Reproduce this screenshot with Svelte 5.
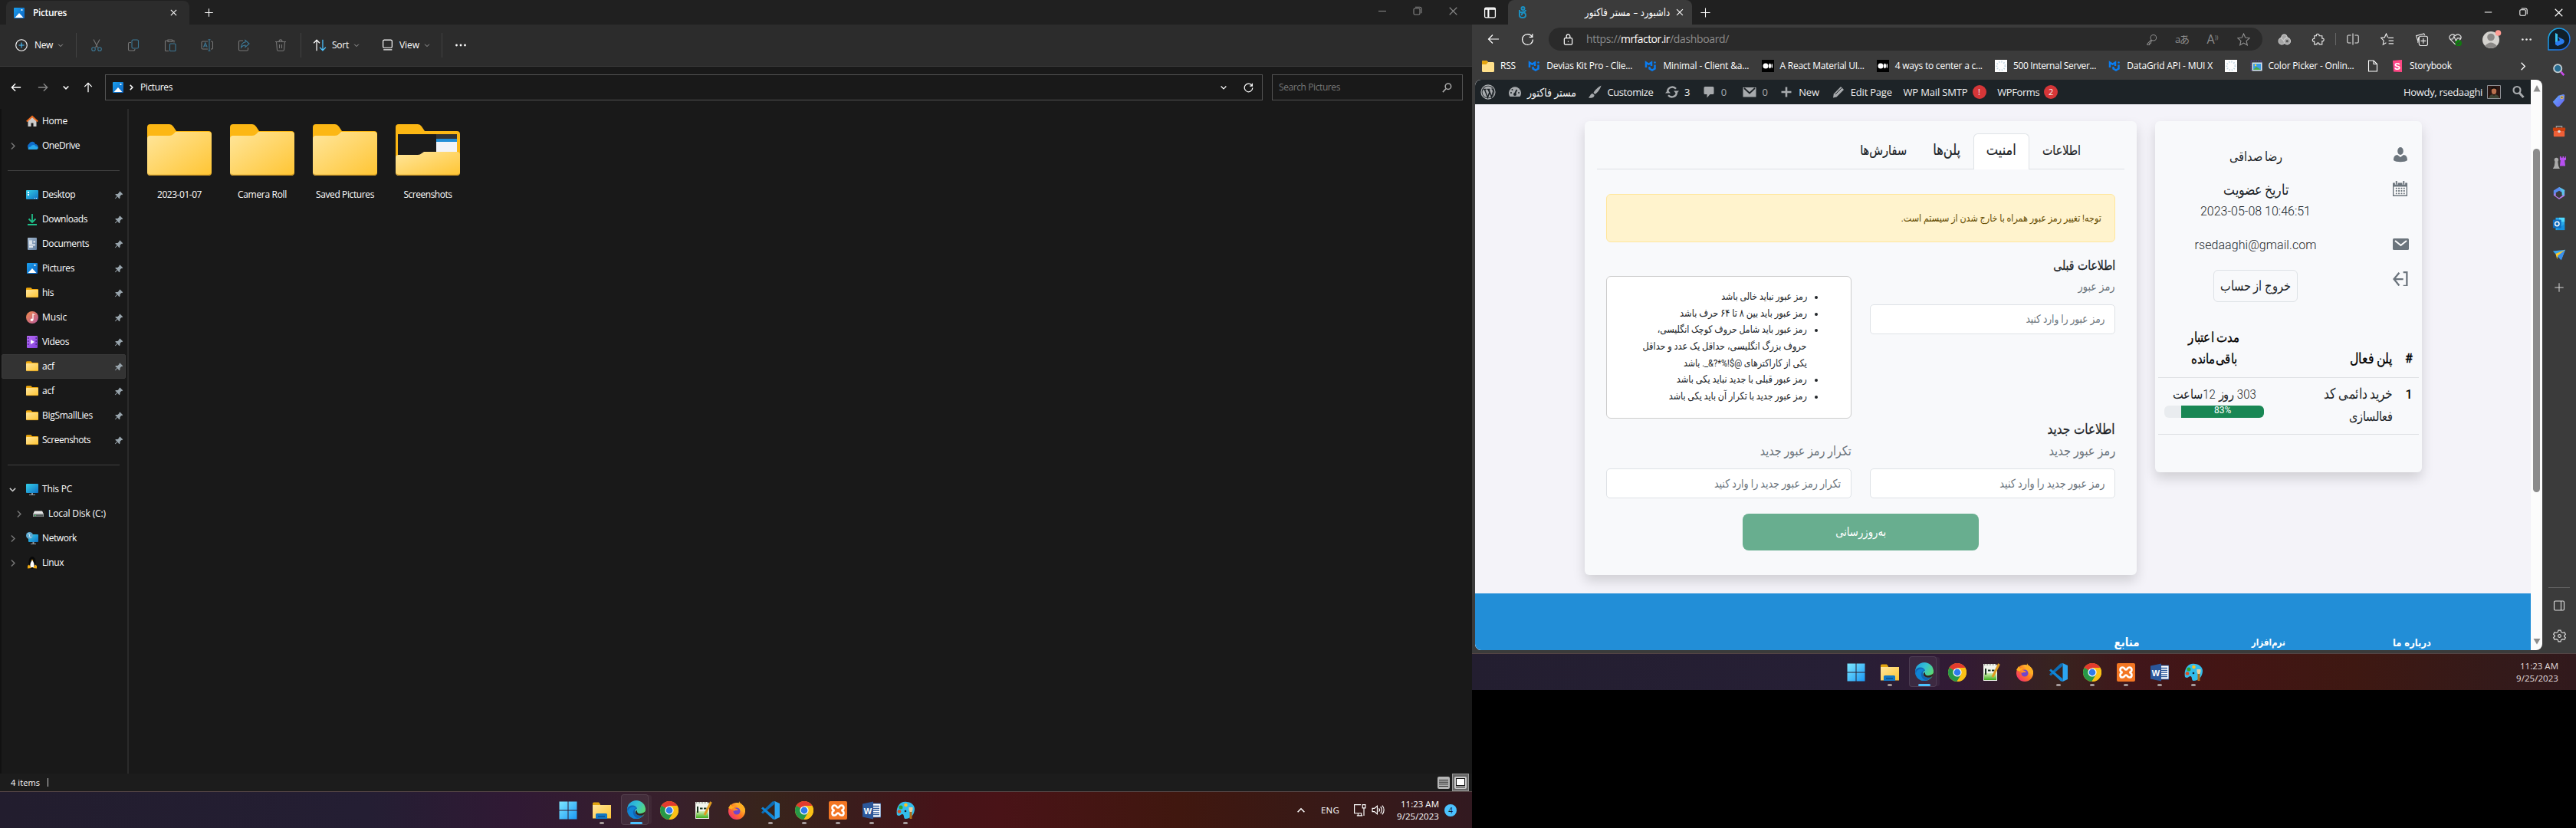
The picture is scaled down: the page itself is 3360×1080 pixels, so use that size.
<script lang="ts">
  // Tunes a label to a given width: Latin by letter spacing,
  // Persian by font size plus a slight horizontal condensing.
  const CONDENSE = 1.2;

  function fit(node: HTMLElement, width: number) {
    const natural = node.getBoundingClientRect().width;
    const text = node.textContent ?? '';
    if (!width || !natural) return;
    if (/[\u0600-\u06ff]/.test(text)) {
      const style = getComputedStyle(node);
      const size = parseFloat(style.fontSize);
      node.style.fontSize = `${((size * width) / natural) * CONDENSE}px`;
      const grown = node.getBoundingClientRect().width;
      node.style.marginInlineEnd = `${width - grown}px`;
      node.style.transformOrigin = style.direction === 'rtl' ? 'right' : 'left';
      node.style.transform = `scaleX(${width / grown})`;
    } else {
      node.style.letterSpacing = `${(width - natural) / text.length}px`;
    }
  }

  const chromeLogo =
    '<circle cx="12" cy="12" r="12" fill="#fbc116"/><path d="M12 12 1.6 6A12 12 0 0 1 22.4 6H12Z" fill="#e33b2e"/><path d="M1.6 6A12 12 0 0 0 11.5 24L17 15 12 12Z" fill="#279847"/><path d="M1.6 6 7 15l5-3Z" fill="#279847"/><path d="M22.4 6H12v6l5 3-5.500 9A12 12 0 0 0 22.400 6Z" fill="#fbc116"/><circle cx="12" cy="12" r="5.600" fill="#fff"/><circle cx="12" cy="12" r="4.400" fill="#2f7bec"/>';

  const line: Record<string, string> = {
    close: '<path d="M3.500 3.500l9 9M12.500 3.500l-9 9"/>',
    plus: '<path d="M8 1.500v13M1.500 8h13"/>',
    min: '<path d="M3 8.500h10"/>',
    max: '<rect x="3" y="5" width="8" height="8" rx="1.500"/><path d="M5 3.200h6a2 2 0 0 1 2 2v6"/>',
    down: '<path d="M3.500 6l4.500 4.500L12.500 6"/>',
    up: '<path d="M3 10.500l5-5 5 5"/>',
    right: '<path d="M6 3l5 5-5 5"/>',
    newItem: '<circle cx="8" cy="8" r="7.300"/><path d="M8 4.500v7M4.500 8h7" stroke="#4cc2ff"/>',
    cut: '<path d="M4 .5l5.500 10.500M12 .5L6.500 11"/><g stroke="#3d7896"><circle cx="4" cy="13" r="2.300"/><circle cx="12" cy="13" r="2.300"/></g>',
    copy: '<path d="M5 4.500H3a1.500 1.500 0 0 0-1.500 1.500v7.500A1.500 1.500 0 0 0 3 15h5a2 2 0 0 0 2-2"/><rect x="6" y="1" width="8.500" height="11" rx="1.500" stroke="#3d7896"/>',
    paste: '<path d="M5 2H2.500A1 1 0 0 0 1.500 3v11.500a1 1 0 0 0 1 1H6M11 2h2v2.500M5 1h5.500v2.500H5z"/><rect x="7.500" y="6" width="7.500" height="9.500" rx="1" stroke="#3d7896"/>',
    rename: '<path d="M9 3H2.500A1.500 1.500 0 0 0 1 4.500v7A1.500 1.500 0 0 0 2.500 13H9M13 3h1a1.500 1.500 0 0 1 1.500 1.500v7A1.500 1.500 0 0 1 14 13h-1"/><path d="M3.500 10.500L5.800 5l2.400 5.500M4.300 9h3M11 .8v14.400M9.500.8h3M9.500 15.200h3" stroke="#3d7896"/>',
    share: '<path d="M7 2H3a1.500 1.500 0 0 0-1.500 1.500v10A1.500 1.500 0 0 0 3 15h9a1.500 1.500 0 0 0 1.500-1.500V11"/><path d="M10 1.500L15 6l-5 4.500V8C7 8 5.500 9.500 4.500 11 4.500 7 7 4 10 4Z" stroke="#3d7896"/>',
    trash: '<path d="M1 3.500h14M6 3.500C6 0 10 0 10 3.500M2.500 3.500l1 10.500a1.500 1.500 0 0 0 1.500 1.300h6a1.500 1.500 0 0 0 1.500-1.300l1-10.500M6.500 7v5M9.500 7v5"/>',
    sort: '<path d="M4.500 14.500V2M1 5.500L4.500 2 8 5.500"/><path d="M11.500 1.500V14M8 10.500l3.500 3.500 3.500-3.500" stroke="#4cc2ff"/>',
    view: '<rect x="2.500" y="2" width="11" height="9.500" rx="1.500"/><path d="M3 14h10.500"/>',
    dots: '<g fill="currentColor" stroke="none"><circle cx="2.500" cy="8" r="1.400"/><circle cx="8" cy="8" r="1.400"/><circle cx="13.500" cy="8" r="1.400"/></g>',
    back: '<path d="M15 8H1.500M7 2.500L1.500 8 7 13.500"/>',
    forward: '<path d="M1 8h13.500M9 2.500L14.500 8 9 13.500"/>',
    upArrow: '<path d="M8 15V1.500M2.500 7L8 1.500 13.500 7"/>',
    reload: '<path d="M13.500 4.500A6.500 6.500 0 1 0 14.500 8M14 1v4h-4"/>',
    find: '<circle cx="9.500" cy="6" r="4"/><path d="M6.500 9.200L2 14"/>',
    workspaces: '<rect x="1.500" y="2" width="13" height="12" rx="1.500"/><path d="M1.500 3.500h13M6 4v10" stroke-width="2"/>',
    lock: '<rect x="2.500" y="6" width="11" height="9" rx="1.500"/><path d="M5.500 6V3.500a2.500 2.500 0 0 1 5 0V6M8 10v1.500"/>',
    key: '<circle cx="10.500" cy="5.500" r="4"/><path d="M7.500 8.500L2 14v1.500h3V13h2v-2l1.500-1.500M11.500 4.500h.5"/>',
    star: '<path d="M8 1l2.100 4.700 5.200.6-3.900 3.500 1.100 5.100L8 12.300 3.500 14.900l1.100-5.100L.7 6.300l5.200-.6Z"/>',
    puzzle: '<path d="M3.500 3.500H6C5 .5 10 .5 9.500 3.500h3.500v3.200c3-.7 3 4 0 3.300V14H9.500c.5-2.500-3.500-2.500-3 0h-3v-3.500C.500 11 .500 6.500 3.500 7Z"/>',
    split: '<path d="M5.500 3H2A1.500 1.500 0 0 0 .8 4.500v7A1.500 1.500 0 0 0 2 13h3.500M10.500 3H14a1.500 1.500 0 0 1 1.200 1.500v7A1.500 1.500 0 0 1 14 13h-3.500M8 .5v15"/>',
    favorites: '<path d="M9 5.500L7 1 5 5.500 0.600 6l3.300 3.300-.8 5L7 12M9.500 6H16M10 9.500h6M10 13h6"/>',
    collections: '<path d="M4 11L1.500 3.500 11 .8l1 2M4.500 5l-1 7"/><rect x="5" y="4" width="10.500" height="11.500" rx="2"/><path d="M10.200 6.500v6.500M7 9.700h6.500"/>',
    heart: '<path d="M8 14L1.500 7.500C-1 3 5 0 8 3.500 11 0 17 3 14.500 7.500L8 14M1 7.500h4L6.500 4 9 10l1.500-3.500H15"/><circle cx="12" cy="12.500" r="4" fill="#107c10" stroke="none"/><path d="M10.200 12.500l1.200 1.300 2.400-2.600" stroke="#3b3b3b"/>',
    file: '<path d="M2.500 1h6.500l4.500 4.500V15h-11ZM9 1v4.500h4.500"/>',
    panel: '<rect x="1.500" y="2" width="13" height="12" rx="1.500"/><path d="M10.500 2v12"/>',
    gear: '<path d="M6.600 1h2.800l.6 2.200 1.800 1 2.200-.7 1.400 2.500L13.800 7.600v1l1.600 1.500-1.400 2.500-2.200-.7-1.800 1L9.400 15H6.600L6 12.900l-1.800-1-2.200.7L.6 10l1.600-1.500v-1L.6 6 2 3.500l2.200.7 1.800-1Z"/><circle cx="8" cy="8" r="1.800"/>',
    display: '<path d="M9.500 1.500H1.500v10.500h9M4.500 15h7M6 12v3M10 12v3M11.500 1.500h3.500v4h-3.500zM13.200 5.500v9.500"/>',
    speaker: '<path d="M1 6v4h2.500L7 13V3L3.500 6ZM9 6a3 3 0 0 1 0 4M11 4a6 6 0 0 1 0 8M13 2.500a8 8 0 0 1 0 11"/>',
  };

  const art: Record<string, string> = {
    picture: '<rect x="1" y="1" width="14" height="14" rx="1" fill="url(#blue)"/><path d="M2.500 14L8 8l5.500 6Z" fill="#fff"/><circle cx="11.500" cy="4" r="1.100" fill="#fff"/>',
    home: '<path d="M2.500 7.500L8 2.500l5.500 5V15h-4v-4.500h-3V15h-4Z" fill="#ccc"/><path d="M.8 8.500L8 1.800l7.200 6.700" fill="none" stroke="#ee6a1c" stroke-width="2"/>',
    onedrive: '<path d="M4 12.500a4 4 0 0 1 0-7C6 1.500 11 2 12 6c4 0 5 5 2 6.500Z" fill="#0f6cc9"/><path d="M3 13c-1-2 1-4 3-3.500C8 6 12 6.500 12.500 9c4-.5 4 4 1 4Z" fill="#28a8ea"/>',
    desktop: '<rect y="2" width="16" height="12" rx="1" fill="url(#teal)"/><path d="M2 4h2v2H2zM2 7h2v2H2z" fill="#fff"/><path d="M11 12.500h1M13 12.500h1" stroke="#fff"/>',
    download: '<path d="M8 1v10M3.500 7.500L8 12l4.500-4.500M2 15h12" fill="none" stroke="#1fbf8a" stroke-width="1.800"/>',
    document: '<rect x="2" width="12" height="16" rx="1" fill="url(#slate)"/><path d="M4 4.500h4M4 7h4M4 9.500h8M4 12h5M9.500 5.500h2.500" stroke="#fff" stroke-width="1.500"/>',
    folder: '<path d="M0 2.500A1.500 1.500 0 0 1 1.500 1.200h5L8 3h7a1 1 0 0 1 1 1v9H0Z" fill="#f0a80c"/><rect y="4" width="16" height="10" rx="1" fill="url(#folder)"/><path d="M.5 13.700h15" stroke="#d99a18" stroke-width=".7"/>',
    music: '<circle cx="8" cy="8" r="8" fill="url(#music)"/><path d="M9 3v8M9 3.500l2.500 1" fill="none" stroke="#fff" stroke-width="1.300"/><circle cx="7.500" cy="11.300" r="1.800" fill="#fff"/>',
    video: '<rect x="1" width="14" height="16" rx="1" fill="url(#violet)"/><path d="M6 5l5 3-5 3Z" fill="#fff"/><path d="M2.800 2v12M13.200 2v12" stroke="#562a96" stroke-width="1.500" stroke-dasharray="2 2"/>',
    pc: '<rect y="1" width="16" height="12" rx="1" fill="url(#teal)"/><path d="M7 13h2v2H7zM4 15h8v1H4z" fill="#8d98a0"/>',
    disk: '<path d="M3 4.500h10l2 4H1Z" fill="#e4e4e4"/><path d="M1 8h14v4H1Z" fill="#8f9494"/><path d="M2 10.500h12" stroke="#4d5555" stroke-width="2"/><circle cx="4" cy="10.500" r=".8" fill="#3ee36b"/>',
    network: '<rect x="3" y="3" width="13" height="10" rx="1" fill="url(#teal)"/><path d="M8.500 13h2v2h-2zM6 15h7v1H6z" fill="#8d98a0"/><circle cx="4.500" cy="4.500" r="4.500" fill="#5aa7cf"/><path d="M2 2l3 1-1 3 3 1" stroke="#cdebf7" fill="none"/>',
    linux: '<ellipse cx="8" cy="8" rx="4.500" ry="8" fill="#080808"/><path d="M8 4.500c2 2.500 3 5 2.500 9.500h-5C5 9.500 6 7 8 4.500Z" fill="#fff"/><path d="M6.500 4h3L8 5.500ZM2 12l2-1.500L7 15l-5 .5ZM14 12l-2-1.500L9 15l5 .5Z" fill="#f0aa12"/>',
    pin: '<path d="M10 2l5 5-1.500 1.200-1-.2-2.500 2.500v3L8.500 15 5.800 11.200 2 15l-.8-.8L5 10.400 1.500 7.500 3 6.500h3L8.700 4 8.500 3Z" fill="#99a5ad"/>',
    listView: '<rect width="16" height="16" rx="2" fill="#b5b5b5"/><path d="M2 4.500h12M2 7.200h12M2 9.800h12M2 12.500h12" stroke="#222"/>',
    tileView: '<rect width="16" height="16" rx="2" fill="#c8c8c8"/><rect x="2.500" y="2.500" width="11" height="9" fill="#fff" stroke="#111"/><path d="M2 13.700h12" stroke="#111"/>',
    site: '<g fill="none" stroke="#1b8fc0" stroke-width="2"><circle cx="9.500" cy="3" r="2"/><path d="M5 5v7c0 4 8 4 8 0 0-5-6-4-5 0M5 8c3 0 8 0 8-3"/></g>',
    lighthouse: '<g fill="#a5a5a5" stroke="#d5d5d5"><circle cx="5" cy="10" r="4"/><circle cx="8" cy="5.500" r="3.500"/><circle cx="11.500" cy="10" r="4"/></g><circle cx="11.500" cy="10" r="1.500" fill="#555"/>',
    mui: '<g fill="none" stroke="#0a7cf0" stroke-width="2.500"><path d="M2 10V3.500l3.500 2.300L9 3.500V8M6.500 9v2.500L10 13.500l3.500-2V6.500"/></g><circle cx="13.500" cy="3.500" r="1.300" fill="#0a7cf0"/>',
    medium: '<rect width="16" height="16" fill="#000"/><circle cx="5" cy="8" r="3.500" fill="#fff"/><ellipse cx="10.500" cy="8" rx="1.500" ry="3.200" fill="#fff"/><ellipse cx="13.300" cy="8" rx=".8" ry="3" fill="#fff"/>',
    loading: '<rect width="16" height="16" fill="#fdfdfd"/><circle cx="8" cy="8" r="5.500" fill="none" stroke="#b9d0df" stroke-width="2" stroke-dasharray="1.200 2"/>',
    rss: '<path d="M0 2.500A1.500 1.500 0 0 1 1.500 1H6l2 2h6.500A1.500 1.500 0 0 1 16 4.500v10A1.500 1.500 0 0 1 14.500 16h-13A1.500 1.500 0 0 1 0 14.500Z" fill="#ffe08a"/><path d="M0 6V2.500A1.500 1.500 0 0 1 1.500 1H6l2 2-2.500 3Z" fill="#e5a50f"/>',
    photo: '<rect x="1" y="1.500" width="14" height="12" fill="none" stroke="#5740a0" stroke-dasharray="2 1"/><rect x="2.500" y="3.500" width="13" height="11" fill="#d7e9f7"/><rect x="4" y="5" width="10" height="8" fill="#3d9be8"/><path d="M4 13l4-4 6 4Z" fill="#4aa84a"/><circle cx="7" cy="7" r="1.200" fill="#ffd83a"/>',
    storybook: '<path d="M2 1l12-1v16L3 15.500Z" fill="#ff4785"/><text x="8" y="12.500" text-anchor="middle" font-family="Liberation Sans" font-weight="700" font-size="12" fill="#fff">S</text>',
    wordpress: '<circle cx="10" cy="10" r="9" fill="none" stroke="#a7aaad" stroke-width="1.300"/><circle cx="10" cy="10" r="7.500" fill="#a7aaad"/><path d="M3.500 6.500h4M5.500 7l4 10 2.300-6.500L10 6.500M8.500 6.500h4M11 7l3.500 9.500L16.800 9c.4-2-1.800-2-1.800-3.500" fill="none" stroke="#1d2327" stroke-width="1.500"/>',
    gauge: '<path d="M3.500 16a8 8 0 1 1 13 0Z" fill="#a7aaad"/><path d="M10 12l2.500-5" stroke="#1d2327" stroke-width="1.800"/><g fill="#1d2327"><circle cx="10" cy="13" r="2"/><circle cx="5" cy="11" r="1"/><circle cx="6.500" cy="7" r="1"/><circle cx="15" cy="11" r="1"/></g>',
    brush: '<path d="M18.500 1.500C14 4 10 8 8.500 11l2 2c3-2 7-7 8-11.500ZM7.500 12c-3 0-3 3-5.500 5.500 4 .8 8-.5 7.500-3.500Z" fill="#a7aaad"/>',
    update: '<path d="M4 9a6.300 6.300 0 0 1 11-3.200M16 11a6.300 6.300 0 0 1-11 3.200" fill="none" stroke="#a7aaad" stroke-width="2.400"/><path d="M12 8.500h7L15.500 12.500ZM1 11.500h7L4.500 7.500Z" fill="#a7aaad"/>',
    comment: '<path d="M5 3h10a1.500 1.500 0 0 1 1.500 1.500v7A1.500 1.500 0 0 1 15 13h-3.500l-4 4.500V13H5a1.500 1.500 0 0 1-1.500-1.500v-7A1.500 1.500 0 0 1 5 3Z" fill="#a7aaad"/>',
    wpMail: '<rect x="1.500" y="4" width="17" height="12.500" fill="#a7aaad"/><path d="M3 5l7 6.500L17 5" fill="none" stroke="#1d2327" stroke-width="1.800"/>',
    wpPlus: '<path d="M10 3.500v13M3.500 10h13" stroke="#a7aaad" stroke-width="2.600"/>',
    pencil: '<path d="M13 3l4 4-9.500 9.500L3 17.500l.8-5Z" fill="#a7aaad"/><path d="M6 13l8-8" stroke="#1d2327"/>',
    wpSearch: '<circle cx="8" cy="7.500" r="4.500" fill="none" stroke="#a7aaad" stroke-width="2.200"/><path d="M11 11l5.500 6" stroke="#a7aaad" stroke-width="3"/>',
    person: '<ellipse cx="10" cy="5" rx="3.800" ry="5" fill="#6c757d"/><path d="M1 17c0-5 2-6.500 5-7l4 3 4-3c3 .5 5 2 5 7-3 3-15 3-18 0Z" fill="#6c757d"/>',
    calendar: '<path d="M0 2.500h20V21H0Z" fill="#6c757d"/><path d="M1.500 8h17v11.500h-17Z" fill="#fff"/><path d="M5 0v5M15 0v5" stroke="#f8f9fb" stroke-width="4"/><path d="M5 0v5M15 0v5" stroke="#6c757d" stroke-width="2"/><path d="M4 10.300h13M4 13.700h13M4 17.200h13" stroke="#6c757d" stroke-width="2" stroke-dasharray="2 1.500"/>',
    mail: '<rect y="3" width="21" height="15" rx="1.500" fill="#6c757d"/><path d="M3 6l7.500 6L18 6" fill="none" stroke="#fff" stroke-width="2"/>',
    exit: '<path d="M8 3.500L1.500 11.500 8 19.500M2 11.500h11M13 3h4.500v17H13" fill="none" stroke="#6c757d" stroke-width="2.200"/>',
    bing: '<path d="M2 28V15A14 14 0 1 1 16 29H2Z" fill="#10202b" stroke="url(#bing)" stroke-width="1.500"/><path d="M11 7l3 1.500v11L11 22Z" fill="#36c5f0"/><path d="M11 22v-3l6-2.500L14.500 12l7 3.500c2 1.500 1.500 4-.5 5.500L14 24Z" fill="#2a7df0"/>',
    sideSearch: '<circle cx="8" cy="8" r="5.700" fill="#276c91" stroke="#c4cdd2" stroke-width="2"/><path d="M12.500 13l4.500 5" stroke="#c94bea" stroke-width="3"/>',
    tag: '<path d="M1 12L9 3l7-2 2 1-.500 8-7.500 9-3 .5L2 14Z" fill="url(#tag)"/><circle cx="14" cy="5.500" r="1.800" fill="#384c98" stroke="#ffcb2e" stroke-width="1.200"/>',
    toolbox: '<path d="M6 6V3h8v3" fill="none" stroke="#999" stroke-width="1.500"/><rect x="1" y="5" width="18" height="5" rx="1" fill="#c9400f"/><rect x="2" y="10" width="16" height="8" rx="1" fill="#ee6038"/><circle cx="10" cy="10.500" r="2" fill="#d6dadd"/>',
    chess: '<path d="M11 1h2v2h2V1h2v2h2V1h1v5l-2 1 1 8h-8l1-8-1-1Z" fill="#b750ef"/><g fill="#aaa"><circle cx="6" cy="6" r="3"/><path d="M4 8h4l1 7 2 4H1l2-4Z"/></g>',
    m365: '<path d="M10 1l8 4.500-3 4-5-3-5 3V14l-3-1V6Z" fill="#588cf0"/><path d="M2 13l3-4v5l5 3 5-4V9l3-3.500V14l-8 5Z" fill="#b678e8"/><path d="M10 1l8 4.500-1 8-3-1V8Z" fill="#5ac6e9"/>',
    outlook: '<path d="M5 1h13v18H5Z" fill="#28a8ea"/><path d="M10 1h8v6h-8Z" fill="#50d9ff"/><path d="M18 10v9H6Z" fill="#1490df"/><rect x="1" y="4" width="12" height="12" rx="1" fill="#0f6cbd"/><circle cx="7" cy="10" r="3" fill="none" stroke="#fff" stroke-width="1.700"/>',
    plane: '<path d="M1 5l18-2-6 15-5-5Z" fill="#38a5ef"/><path d="M19 3L8 12l-1 5-2-8Z" fill="#ffc928"/><path d="M19 3L8 12l5 6Z" fill="#3b8eea"/>',
    windows: '<path d="M.5.5h11v11H.5zM12.500.5h11v11h-11zM.5 12.500h11v11H.5zM12.500 12.500h11v11h-11z" fill="url(#win)"/>',
    explorer: '<path d="M0 3a1.500 1.500 0 0 1 1.500-1.500H8L10 4v3H0Z" fill="#e0a30f"/><path d="M0 5h24v17.500H0Z" fill="url(#folder)"/><path d="M4 23v-5.500A1.500 1.500 0 0 1 5.500 16h12a1.500 1.500 0 0 1 1.500 1.500V23Z" fill="#1278c4"/><path d="M7 20h9" stroke="#0c5b9c" stroke-width="2"/>',
    edge: '<circle cx="12" cy="12" r="12" fill="url(#edge)"/><path d="M0 11C2 5 12 5 13 11c-3 0-4 4-1 7 3 2 7 2 10 0-4 7-13 8-18 3C1 18 0 15 0 11Z" fill="#1262b3"/><path d="M8 14c-1 4 2 9 7 9.500-7 1.500-13-2-14-8C1 9 8 6 12 10c-2 .5-3 2-4 4Z" fill="#0f83d5"/><path d="M13 13c-1 5 6 6 11 1l-1 3.500c-3 3-8 3-11 .500-2-2-1-5 1-5Z" fill="#32201f"/>',
    chrome: chromeLogo,
    notepad: '<path d="M2 1h16l2 2v20H2Z" fill="#f2f5ee"/><path d="M3 13h16v9H3Z" fill="url(#green)"/><path d="M3 2h15" stroke="#a3a79c" stroke-width="2" stroke-dasharray="1 1"/><path d="M5 7v8M8 9.500h3.500M13 9.500h3.500" stroke="#16301b" stroke-width="2"/><path d="M22.500 1L14 18" stroke="#df9b20" stroke-width="3"/>',
    firefox: '<circle cx="12" cy="13" r="11" fill="url(#fox)"/><path d="M15 0c1 4 9 6 8 14l-6-1-5-6c2-1 3-4 3-7ZM1 9l3-5 2 3 4-1-4 5Z" fill="#ffae22"/><circle cx="12" cy="13" r="4.500" fill="#7145cb"/><path d="M6 9c3-1 5 1 8 2-2 2-4 0-6 2Z" fill="#ff8e26"/>',
    vscode: '<path d="M17 4L2 16.500 0 14.500 14.500.500 18 0Z" fill="#0c6eb7"/><path d="M17 20L2 7.500 0 9.500l15 14L18 24Z" fill="#0f86d8"/><path d="M17.500 0L24 3v18l-6.500 3Z" fill="#2ba4f1"/>',
    xampp: '<rect width="24" height="24" rx="2" fill="#f37623"/><path d="M7.500 5.500c-4 0-4 5.500 0 6.500-4 1-4 6.500 0 6.500 3 0 2.500-3 4.500-3s1.500 3 4.500 3c4 0 4-5.500 0-6.500 4-1 4-6.500 0-6.500-3 0-2.500 3-4.500 3s-1.500-3-4.500-3Z" fill="none" stroke="#fff" stroke-width="2.600"/>',
    word: '<rect x="12" y="3" width="12" height="18" fill="#fff" stroke="#2b579a"/><path d="M14 6.500h8M14 9.300h8M14 12h8M14 14.800h8M14 17.500h8" stroke="#2b579a" stroke-width="1.300"/><path d="M0 3.500L14 .5v23l-14-3Z" fill="#2b579a"/><text x="7" y="16.500" text-anchor="middle" font-family="Liberation Sans" font-weight="700" font-size="11" fill="#fff">W</text>',
    paint: '<path d="M14 1C5-1-1 8 1 18c3 3 5-1 7-1 3 0 1 6 4 6 7 0 12-6 12-13C24 5 19 1 14 1Z" fill="#32bdec"/><circle cx="6" cy="8" r="2.500" fill="#2fa52f"/><circle cx="12.500" cy="5" r="2.300" fill="#ffc220"/><circle cx="4" cy="13.500" r="2.300" fill="#dc4e22"/><circle cx="12" cy="13" r="1.300" fill="#123"/><path d="M19 12v11" stroke="#b06d18" stroke-width="3"/><path d="M16.500 8h5v3l-1 3h-3l-1-3Z" fill="#e9cf9d"/>',
  };

  const places = [
    { label: 'Home', art: 'home', w: 33 },
    { label: 'OneDrive', art: 'onedrive', w: 49, caret: 'right' },
    null,
    { label: 'Desktop', art: 'desktop', w: 43, pin: true },
    { label: 'Downloads', art: 'download', w: 59, pin: true },
    { label: 'Documents', art: 'document', w: 61, pin: true },
    { label: 'Pictures', art: 'picture', w: 42, pin: true },
    { label: 'his', art: 'folder', w: 15, pin: true },
    { label: 'Music', art: 'music', w: 32, pin: true },
    { label: 'Videos', art: 'video', w: 35, pin: true },
    { label: 'acf', art: 'folder', w: 16, pin: true, active: true },
    { label: 'acf', art: 'folder', w: 16, pin: true },
    { label: 'BigSmallLies', art: 'folder', w: 66, pin: true },
    { label: 'Screenshots', art: 'folder', w: 63, pin: true },
    null,
    { label: 'This PC', art: 'pc', w: 39, caret: 'down' },
    { label: 'Local Disk (C:)', art: 'disk', w: 75, caret: 'right', nested: true },
    { label: 'Network', art: 'network', w: 45, caret: 'right' },
    { label: 'Linux', art: 'linux', w: 28, caret: 'right' },
  ];

  const folders = [
    { name: '2023-01-07', w: 58 },
    { name: 'Camera Roll', w: 64 },
    { name: 'Saved Pictures', w: 76 },
    { name: 'Screenshots', w: 63, preview: true },
  ];

  const apps = [
    { art: 'windows' }, { art: 'explorer', open: true }, { art: 'edge', active: true }, { art: 'chrome' },
    { art: 'notepad' }, { art: 'firefox' }, { art: 'vscode', open: true }, { art: 'chrome', open: true },
    { art: 'xampp', open: true }, { art: 'word', open: true }, { art: 'paint', open: true },
  ];

  const bookmarks = [
    { art: 'rss', label: 'RSS', w: 20 },
    { art: 'mui', label: 'Devias Kit Pro - Clie...', w: 112 },
    { art: 'mui', label: 'Minimal - Client &a...', w: 112 },
    { art: 'medium', label: 'A React Material UI...', w: 110 },
    { art: 'medium', label: '4 ways to center a c...', w: 114 },
    { art: 'loading', label: '500 Internal Server...', w: 108 },
    { art: 'mui', label: 'DataGrid API - MUI X', w: 112 },
    { art: 'loading' },
    { art: 'photo', label: 'Color Picker - Onlin...', w: 112 },
    { line: 'file' },
    { art: 'storybook', label: 'Storybook', w: 55 },
  ];

  const adminItems = [
    { art: 'wordpress' },
    { art: 'gauge', label: 'مستر فاکتور', w: 64 },
    { art: 'brush', label: 'Customize', w: 60 },
    { art: 'update', label: '3', w: 7 },
    { art: 'comment', label: '0', w: 7, dim: true },
    { art: 'wpMail', label: '0', w: 7, dim: true, shift: true },
    { art: 'wpPlus', label: 'New', w: 27 },
    { art: 'pencil', label: 'Edit Page', w: 54 },
    { label: 'WP Mail SMTP', w: 84, badge: '!' },
    { label: 'WPForms', w: 55, badge: '2' },
  ];

  const tabs = [
    { label: 'اطلاعات', w: 50 },
    { label: 'امنیت', w: 39, active: true },
    { label: 'پلن‌ها', w: 36 },
    { label: 'سفارش‌ها', w: 61 },
  ];

  const rules = [
    { lines: [['رمز عبور نباید خالی باشد', 112]] },
    { lines: [['رمز عبور باید بین ۸ تا ۶۴ حرف باشد', 166]] },
    { lines: [['رمز عبور باید شامل حروف کوچک انگلیسی،', 195], ['حروف بزرگ انگلیسی، حداقل یک عدد و حداقل', 214], ['یکی از کاراکترهای @$!%*?&_. باشد', 161]] },
    { lines: [['رمز عبور قبلی با جدید نباید یکی باشد', 170]] },
    { lines: [['رمز عبور جدید با تکرار آن باید یکی باشد', 180]] },
  ] as { lines: [string, number][] }[];

  const usage = 83;
</script>

{#snippet glyph(name: string, size: number, stroke = 1.1)}
  <svg class="icon" width={size} height={size} viewBox="0 0 16 16" fill="none" stroke="currentColor" stroke-width={stroke}>{@html line[name]}</svg>
{/snippet}

{#snippet pic(name: string, size: number, box = 16)}
  <svg class="icon" width={size} height={size} viewBox="0 0 {box} {box}">{@html art[name]}</svg>
{/snippet}

{#snippet taskbar(main: boolean)}
  <div class="taskbar" class:main>
    <div class="apps">
      {#each apps as app}
        <div class="app" class:active={app.active}>
          {@render pic(app.art, 24, 24)}
          {#if app.open || app.active}<i></i>{/if}
        </div>
      {/each}
    </div>
    <div class="tray">
      {#if main}
        {@render glyph('up', 14, 1.8)}
        <span class="lang" use:fit={24}>ENG</span>
        {@render glyph('display', 17)}
        <div class="sound">{@render glyph('speaker', 17)}</div>
      {/if}
      <div class="clock"><span use:fit={50}>11:23 AM</span><span use:fit={55}>9/25/2023</span></div>
      {#if main}<b class="count">4</b>{/if}
    </div>
  </div>
{/snippet}

<svg class="defs" width="0" height="0">
  <defs>
    <linearGradient id="blue" x2="1" y2="1"><stop stop-color="#1ba0ee" /><stop offset="1" stop-color="#0b62c0" /></linearGradient>
    <linearGradient id="teal" x2="1" y2="1"><stop stop-color="#35d0e8" /><stop offset="1" stop-color="#0f70c4" /></linearGradient>
    <linearGradient id="slate" x2="1" y2="1"><stop stop-color="#a9bdd3" /><stop offset="1" stop-color="#617d9e" /></linearGradient>
    <linearGradient id="folder" x2="1" y2="1"><stop stop-color="#ffe69c" /><stop offset="1" stop-color="#ffc533" /></linearGradient>
    <linearGradient id="music" x2="1" y2="1"><stop stop-color="#f08a4b" /><stop offset="1" stop-color="#b95a9c" /></linearGradient>
    <linearGradient id="violet" x2="1" y2="1"><stop stop-color="#b76cf5" /><stop offset="1" stop-color="#8240da" /></linearGradient>
    <linearGradient id="bing" x2="1" y2="1"><stop stop-color="#19b5e8" /><stop offset="1" stop-color="#2060e8" /></linearGradient>
    <linearGradient id="tag" x2="1" y2="1"><stop stop-color="#60b0ff" /><stop offset="1" stop-color="#6a5cf0" /></linearGradient>
    <linearGradient id="win" x2="1" y2="1"><stop stop-color="#7ee8ff" /><stop offset="1" stop-color="#1a98f5" /></linearGradient>
    <linearGradient id="edge" x2="1" y2=".6"><stop stop-color="#1b9de2" /><stop offset=".5" stop-color="#35c1d2" /><stop offset="1" stop-color="#5ddc6a" /></linearGradient>
    <linearGradient id="green" y2="1" x2="0"><stop stop-color="#d8f0b8" /><stop offset="1" stop-color="#3fae1c" /></linearGradient>
    <linearGradient id="fox" x1="1" x2="0" y2="1"><stop stop-color="#fff04a" /><stop offset=".5" stop-color="#ff7a1e" /><stop offset="1" stop-color="#f0168a" /></linearGradient>
  </defs>
</svg>

<div class="screens">
  <section class="primary">
    <header class="x-tabs">
      <div class="x-tab">
        {@render pic('picture', 16)}
        <span use:fit={44}>Pictures</span>
        <div class="x-close">{@render glyph('close', 13, 1.3)}</div>
      </div>
      <div class="x-add">{@render glyph('plus', 13, 1.3)}</div>
      <div class="win-buttons faded">
        <span>{@render glyph('min', 16)}</span><span>{@render glyph('max', 16)}</span><span>{@render glyph('close', 17)}</span>
      </div>
    </header>

    <div class="x-tools">
      <div class="cmd new">{@render glyph('newItem', 16)}<span use:fit={24}>New</span><em>{@render glyph('down', 10, 1.5)}</em></div>
      <hr />
      <div class="x-actions">
        {#each ['cut', 'copy', 'paste', 'rename', 'share', 'trash'] as name}
          <div>{@render glyph(name, 16)}</div>
        {/each}
      </div>
      <hr />
      <div class="cmd sort">{@render glyph('sort', 18)}<span use:fit={22}>Sort</span><em>{@render glyph('down', 10, 1.5)}</em></div>
      <div class="cmd view">{@render glyph('view', 17)}<span use:fit={26}>View</span><em>{@render glyph('down', 10, 1.5)}</em></div>
      <hr />
      <div class="more">{@render glyph('dots', 16)}</div>
    </div>

    <div class="x-nav">
      <div class="x-arrows">
        {@render glyph('back', 14, 1.6)}
        <span class="off">{@render glyph('forward', 14, 1.6)}</span>
        {@render glyph('down', 12, 2)}
        {@render glyph('upArrow', 14, 1.5)}
      </div>
      <div class="x-path">
        {@render pic('picture', 16)}
        {@render glyph('right', 10, 2.4)}
        <span use:fit={42}>Pictures</span>
        <div class="x-path-end">{@render glyph('down', 12, 1.6)}{@render glyph('reload', 13, 1.5)}</div>
      </div>
      <div class="x-search"><span use:fit={80}>Search Pictures</span>{@render glyph('find', 15, 1.6)}</div>
    </div>

    <div class="x-body">
      <nav class="x-side">
        {#each places as place}
          {#if place}
            <div class="place" class:active={place.active} class:nested={place.nested}>
              <div class="twist" class:opened={place.caret === 'down'}>{#if place.caret}{@render glyph(place.caret, 13, 1.8)}{/if}</div>
              {@render pic(place.art, 16)}
              <span use:fit={place.w}>{place.label}</span>
              {#if place.pin}<div class="pin">{@render pic('pin', 12)}</div>{/if}
            </div>
          {:else}
            <div class="rule"></div>
          {/if}
        {/each}
      </nav>
      <div class="files">
        {#each folders as folder}
          <figure>
            <svg width="84" height="67" viewBox="0 0 84 67">
              <path d="M0 4a4 4 0 0 1 4-4h25q3 0 5 3l4 6h42a4 4 0 0 1 4 4v50H0Z" fill="#fcb714" />
              {#if folder.preview}
                <path d="M3 13h50v31H3Z" fill="#1b1b1b" />
                <path d="M53 13h27v6H53Z" fill="#333" />
                <path d="M53 19h27v4H53Z" fill="#228ed7" />
                <path d="M53 23h27v18H53Z" fill="#f1f3f8" />
                <path d="M0 44q0-4 4-4h25q3 0 5-2l3-2h43q4 0 4 4v23a4 4 0 0 1-4 4H4a4 4 0 0 1-4-4Z" fill="url(#folder)" />
              {:else}
                <path d="M0 19q0-4 4-4h25q3 0 5-2l3-3h43q4 0 4 4v49a4 4 0 0 1-4 4H4a4 4 0 0 1-4-4Z" fill="url(#folder)" />
              {/if}
              <path d="M1 64.500q1 1.800 3 1.800h76q2 0 3-1.800" fill="none" stroke="#c8901c" />
            </svg>
            <figcaption><span use:fit={folder.w}>{folder.name}</span></figcaption>
          </figure>
        {/each}
      </div>
    </div>

    <footer class="x-status">
      <span use:fit={38}>4 items</span><i></i>
      <div class="modes"><div>{@render pic('listView', 16)}</div><div class="on">{@render pic('tileView', 16)}</div></div>
    </footer>
    {@render taskbar(true)}
  </section>

  <section class="secondary">
    <header class="b-tabs">
      <div class="b-space">{@render glyph('workspaces', 17, 1.2)}</div>
      <div class="b-tab">
        {@render pic('site', 16)}
        <span class="b-title" dir="rtl"><span use:fit={111}>داشبورد – مستر فاکتور</span></span>
        {@render glyph('close', 14, 1.2)}
      </div>
      <div class="b-add">{@render glyph('plus', 15)}</div>
      <div class="win-buttons">
        <span>{@render glyph('min', 15)}</span><span>{@render glyph('max', 15)}</span><span>{@render glyph('close', 17)}</span>
      </div>
    </header>

    <div class="b-bar">
      <div class="b-back">{@render glyph('back', 16, 1.2)}</div>
      <div class="b-reload">{@render glyph('reload', 17, 1.1)}</div>
      <div class="omnibox">
        {@render glyph('lock', 15, 1.3)}
        <p><span use:fit={45}>https://</span><b use:fit={64}>mrfactor.ir</b><span use:fit={77}>/dashboard/</span></p>
        <div class="omni-icons">
          <div>{@render glyph('key', 15)}</div><div class="jp">aあ</div><div class="read">A<sup>))</sup></div><div>{@render glyph('star', 17)}</div>
        </div>
      </div>
      <div class="b-ext">
        <div>{@render pic('lighthouse', 17)}</div>
        <div>{@render glyph('puzzle', 17)}</div>
        <hr />
        <div>{@render glyph('split', 16)}</div>
        <div>{@render glyph('favorites', 17)}</div>
        <div>{@render glyph('collections', 17)}</div>
        <div>{@render glyph('heart', 17)}</div>
        <div class="me">
          <svg width="26" height="24" viewBox="0 0 26 24"><circle cx="12" cy="13" r="11" fill="#d5d3cf" /><circle cx="12" cy="9.500" r="4.800" fill="#8a8886" /><path d="M4 21q8-9 16 0-8 6-16 0Z" fill="#8a8886" /><circle cx="21.500" cy="4" r="3.800" fill="#ff9d94" /></svg>
        </div>
        <div>{@render glyph('dots', 15)}</div>
      </div>
      <div class="b-bing">{@render pic('bing', 31, 31)}</div>
    </div>

    <div class="b-main">
      <div class="b-left">
        <div class="bookmarks">
          {#each bookmarks as mark}
            <div class="bookmark">
              {#if mark.line}{@render glyph(mark.line, 16)}{:else}{@render pic(mark.art ?? '', 16)}{/if}
              {#if mark.label}<span use:fit={mark.w ?? 0}>{mark.label}</span>{/if}
            </div>
          {/each}
          <div class="b-more">{@render glyph('right', 15, 1.4)}</div>
        </div>

        <div class="viewport">
          <div class="page">
            <div class="admin">
              {#each adminItems as item}
                <div class="admin-item" class:dim={item.dim} class:shift={item.shift}>
                  {#if item.art}{@render pic(item.art, 20, 20)}{/if}
                  {#if item.label}<span use:fit={item.w}>{item.label}</span>{/if}
                  {#if item.badge}<b>{item.badge}</b>{/if}
                </div>
              {/each}
              <div class="howdy">
                <span use:fit={103}>Howdy, rsedaaghi</span>
                <svg width="18" height="18" viewBox="0 0 18 18"><path d="M.5.5h17v17H.5Z" fill="#2b1612" stroke="#8c8f94" /><ellipse cx="9" cy="7.500" rx="3.200" ry="4.500" fill="#b8704e" /><path d="M5 6q0-4 4-4t4 4q-4-3-8 0Z" fill="#15100e" /><path d="M2 17q1-4 5-5l2 2 2-2q4 1 5 5Z" fill="#3c4435" /></svg>
                {@render pic('wpSearch', 20, 20)}
              </div>
            </div>

            <main>
              <article class="card account">
                <div class="tabs" dir="rtl">
                  {#each tabs as tab}
                    <div class="tab" class:active={tab.active}><span use:fit={tab.w}>{tab.label}</span></div>
                  {/each}
                </div>
                <div class="pane" dir="rtl">
                  <div class="alert"><span use:fit={261}>توجه! تغییر رمز عبور همراه با خارج شدن از سیستم است.</span></div>
                  <div class="form">
                    <div>
                      <h3><span use:fit={81}>اطلاعات قبلی</span></h3>
                      <div class="label"><span use:fit={48}>رمز عبور</span></div>
                      <div class="input"><span use:fit={103}>رمز عبور را وارد کنید</span></div>
                    </div>
                    <ul>
                      {#each rules as rule}
                        <li>{#each rule.lines as [text, w]}<div><span use:fit={w}>{text}</span></div>{/each}</li>
                      {/each}
                    </ul>
                    <div>
                      <h3><span use:fit={88}>اطلاعات جدید</span></h3>
                      <div class="label"><span use:fit={87}>رمز عبور جدید</span></div>
                      <div class="input"><span use:fit={137}>رمز عبور جدید را وارد کنید</span></div>
                    </div>
                    <div class="repeat">
                      <div class="label"><span use:fit={119}>تکرار رمز عبور جدید</span></div>
                      <div class="input"><span use:fit={165}>تکرار رمز عبور جدید را وارد کنید</span></div>
                    </div>
                  </div>
                  <div class="submit"><span use:fit={66}>به‌روزرسانی</span></div>
                </div>
              </article>

              <aside class="card profile">
                <div class="info"><div><span use:fit={69}>رضا صداقی</span></div>{@render pic('person', 20, 20)}</div>
                <div class="info joined"><div><span use:fit={85}>تاریخ عضویت</span><span use:fit={144}>2023-05-08 10:46:51</span></div>{@render pic('calendar', 20, 21)}</div>
                <div class="info"><div><span use:fit={159}>rsedaaghi@gmail.com</span></div>{@render pic('mail', 21, 21)}</div>
                <div class="info"><div><div class="logout"><span use:fit={92}>خروج از حساب</span></div></div>{@render pic('exit', 21, 20)}</div>
                <div class="plans" dir="rtl">
                  <div class="row head">
                    <div class="num">#</div>
                    <div class="plan"><span use:fit={56}>پلن فعال</span></div>
                    <div class="left"><span use:fit={67}>مدت اعتبار</span><span use:fit={60}>باقی‌مانده</span></div>
                  </div>
                  <div class="row">
                    <div class="num">1</div>
                    <div class="plan"><span use:fit={90}>خرید دائمی کد</span><span use:fit={57}>فعالسازی</span></div>
                    <div class="left"><span use:fit={109}>303 روز 12ساعت</span>
                      <div class="meter"><div style="width: {usage}%">{usage}%</div></div>
                    </div>
                  </div>
                </div>
              </aside>
            </main>

            <footer class="site-footer">
              <span dir="rtl" use:fit={33}>منابع</span><i></i><span dir="rtl" use:fit={44}>نرم‌افزار</span><i class="short"></i><span dir="rtl" use:fit={50}>درباره ما</span>
            </footer>
          </div>
          <div class="scroll"><svg width="10" height="9"><path d="M5 0l4.500 8.500h-9Z" fill="#8b8b8b" /></svg><div></div><svg width="10" height="8"><path d="M5 7.500L.5 0h9Z" fill="#8b8b8b" /></svg></div>
        </div>
      </div>

      <div class="b-side">
        {#each ['sideSearch', 'tag', 'toolbox', 'chess', 'm365', 'outlook', 'plane'] as name}
          <div>{@render pic(name, 18, 20)}</div>
        {/each}
        <div class="side-add">{@render glyph('plus', 14)}</div>
        <hr />
        <div>{@render glyph('panel', 16)}</div>
        <div>{@render glyph('gear', 17)}</div>
      </div>
    </div>
    {@render taskbar(false)}
  </section>
</div>

<style>
  :global(body) { margin: 0; background: #000; }
  .defs { position: absolute; }
  .screens { display: flex; align-items: flex-start; width: 3360px; height: 1080px; overflow: hidden; background: #000; color: #fff; font: 12px/16px "Open Sans", "Noto Sans", sans-serif; white-space: nowrap; }
  .screens :global(*) { box-sizing: border-box; }
  .screens span, .screens b { display: inline-block; flex: none; }
  .icon { display: block; flex: none; }
  hr { margin: 0; border: 0; }

  .primary { display: flex; flex-direction: column; width: 1920px; height: 1080px; background: #191919; }
  .x-tabs { display: flex; align-items: center; height: 32px; padding-left: 8px; background: #202020; }
  .x-tab { display: flex; align-items: center; align-self: flex-end; gap: 10px; width: 239px; height: 31px; padding: 0 14px 0 9px; background: #2c2c2c; border-radius: 8px 8px 0 0; font-weight: 600; }
  .x-close { margin-left: auto; }
  .x-add { margin-left: 19px; }
  .win-buttons { display: flex; margin-left: auto; }
  .win-buttons span { display: flex; justify-content: center; width: 46px; }
  .x-tabs .win-buttons { margin: -4px 2px 0 auto; }
  .faded { color: #858585; }
  .x-tools { display: flex; align-items: center; height: 55px; padding: 0 0 1px; background: #2c2c2c; border-bottom: 1px solid #3b3b3b; }
  .x-tools hr { width: 1px; height: 32px; background: #424242; }
  .cmd { display: flex; align-items: center; }
  .cmd em { margin-left: 5px; color: #aaa; }
  .new { margin: 0 15px 0 20px; gap: 0; }
  .new span { margin-left: 9px; }
  .x-actions { display: flex; margin: 0 2px; color: #777; }
  .x-actions div { display: flex; justify-content: center; width: 48px; }
  .sort { margin-left: 15px; }
  .sort span { margin-left: 7px; }
  .view { margin: 0 14px 0 27px; }
  .view span { margin-left: 7px; }
  .more { margin-left: 16px; }
  .x-nav { display: flex; height: 55px; padding-top: 10px; }
  .x-arrows { display: flex; align-items: center; height: 34px; width: 137px; padding-left: 14px; }
  .x-arrows > :global(:nth-child(2)) { margin: 0 17px 0 21px; }
  .x-arrows > :global(:nth-child(3)) { margin-right: 16px; }
  .off { color: #888; }
  .x-path, .x-search { display: flex; align-items: center; height: 34px; border: 1px solid #535353; }
  .x-path { width: 1510px; padding: 0 11px 0 8px; gap: 4px; }
  .x-path span { margin-left: 3px; }
  .x-path-end { display: flex; align-items: center; gap: 20px; margin-left: auto; }
  .x-search { justify-content: space-between; width: 249px; margin-left: 12px; padding: 0 12px 0 8px; color: #777; }
  .x-search :global(svg) { color: #aaa; }

  .x-body { display: flex; flex: 1; }
  .x-side { width: 168px; border-left: 2px solid #111; border-right: 2px solid #2b2b2b; }
  .place { display: flex; align-items: center; width: 162px; height: 32px; }
  .place > span { margin-left: 5px; }
  .active.place { background: #333; border: 1px solid #3a3a3a; border-radius: 2px; }
  .twist { display: flex; justify-content: center; width: 32px; padding-right: 4px; color: #777; }
  .active .twist { width: 31px; }
  .opened { color: #ccc; }
  .nested .twist { width: 40px; padding: 0 0 0 4px; }
  .pin { margin: 0 3px 0 auto; }
  .active .pin { margin-right: 2px; }
  .rule { width: 146px; height: 32px; margin-left: 8px; background: linear-gradient(#404040, #404040) 0 16px / 100% 1px no-repeat; }
  .files { display: flex; padding: 20px 0 0 12px; }
  figure { width: 108px; margin: 0; text-align: center; }
  figure svg { display: block; margin: 0 auto; }
  figcaption { margin-top: 17px; }
  .x-status { display: flex; align-items: center; height: 23px; padding-left: 14px; background: #1c1c1c; font-size: 11px; }
  .x-status > i { width: 1px; height: 11px; margin-left: 10px; background: #ccc; }
  .modes { display: flex; align-items: center; gap: 3px; margin: 0 4px 0 auto; }
  .modes .on { display: flex; align-items: center; justify-content: center; width: 22px; height: 23px; background: #666; border: 1px solid #999; }

  .taskbar { display: grid; grid-template-columns: 1fr auto 1fr; height: 48px; border-top: 1px solid #554545; background: linear-gradient(90deg, #231e30 0, #261f35 33%, #321a35 44%, #38231f 53%, #40161a 60%, #431514 68%, #3e1812 80%, #341a1a 93%, #31191c); }
  .main.taskbar { background: linear-gradient(90deg, #221d2e 0, #241e33 25%, #301934 35%, #38202b 46%, #38241b 52%, #3b1c1c 58%, #461318 64%, #491317 68%, #40170f 80%, #391915 88%, #321920); }
  .apps { display: flex; grid-column: 2; padding-left: 2px; }
  .app { position: relative; display: flex; align-items: center; justify-content: center; width: 44px; height: 47px; }
  .app i { position: absolute; bottom: 5px; width: 6px; height: 3px; border-radius: 2px; background: #a59a9a; }
  .app.active { width: 36px; height: 40px; margin: 3px 5px 0 3px; border: 1px solid #ffffff18; border-radius: 4px; background: #ffffff10; box-shadow: 5px 0 0 -1px #ffffff0c; }
  .app.active :global(svg) { margin-left: 3px; }
  .app.active i { bottom: 0; left: 11px; width: 16px; background: #4cc2ff; }
  .tray { display: flex; align-items: center; justify-content: flex-end; padding-right: 23px; color: #e4dede; font-size: 11.500px; }
  .main .tray { padding-right: 20px; color: #fff; }
  .lang { margin: 0 18px 0 19px; }
  .sound { margin: 0 16px 0 7px; }
  .clock { display: flex; flex-direction: column; align-items: flex-end; width: 55px; }
  .count { width: 16px; height: 16px; margin-left: 7px; border-radius: 8px; background: #4cc2ff; color: #123; font-size: 10px; font-weight: 400; text-align: center; }

  .secondary { display: flex; flex-direction: column; width: 1440px; height: 900px; background: #3b3b3b; }
  .b-tabs { display: flex; align-items: center; height: 32px; background: #202020; }
  .b-space { width: 47px; padding-left: 15px; }
  .b-tab { display: flex; align-items: center; width: 240px; height: 32px; padding: 0 9px 0 10px; background: #3b3b3b; border-radius: 8px 8px 0 0; }
  .b-title { margin: 0 6px 0 auto; font-family: "DejaVu Sans", sans-serif; }
  .b-add { margin-left: 10px; }
  .b-tabs .win-buttons { margin-right: 0; }
  .b-bar { display: flex; align-items: center; height: 36px; padding: 2px 0 0; }
  .b-back { width: 64px; padding-left: 20px; }
  .b-reload { width: 36px; }
  .omnibox { display: flex; align-items: center; width: 931px; height: 30px; padding: 0 5px 0 18px; border-radius: 15px; background: #2a2a2a; color: #fff; font-size: 14px; }
  .omnibox p { display: flex; margin: 0 0 0 16px; line-height: 20px; }
  .omnibox p span { color: #8c8c8c; }
  .omnibox p b { font-weight: 400; }
  .omni-icons { display: flex; align-items: center; margin-left: auto; color: #8d8d8d; }
  .omni-icons div { display: flex; justify-content: center; width: 40px; }
  .jp { font: 13px/20px "Open Sans", "Noto Sans CJK JP", sans-serif; letter-spacing: -1px; }
  .read { font-size: 16px; }
  .read sup { font-size: 8px; line-height: 10px; }
  .b-ext { display: flex; align-items: center; margin-left: 6px; color: #e6e6e6; }
  .b-ext div { display: flex; justify-content: center; width: 44.500px; }
  .b-ext hr { width: 1px; height: 16px; background: #666; }
  .b-ext .me { width: 48px; padding-left: 2px; }
  .b-bing { margin-left: 4px; }
  .b-main { display: flex; height: 784px; }
  .b-left { width: 1396px; padding-left: 4px; }
  .bookmarks { display: flex; align-items: center; gap: 16.200px; height: 36px; padding-left: 9px; }
  .bookmark { display: flex; align-items: center; gap: 8px; }
  .b-more { margin: 0 18px 0 auto; }
  .viewport { display: flex; height: 744px; border-radius: 8px; overflow: hidden; background: #fcfcfc; }
  .page { width: 1377px; background: #f4f3f9; }
  .admin { display: flex; align-items: center; gap: 14.700px; height: 32px; padding-left: 7px; background: #1d2327; color: #f0f0f1; font-size: 13px; }
  .admin-item { display: flex; align-items: center; gap: 6px; }
  .admin-item span { font-family: "Open Sans", "DejaVu Sans", sans-serif; }
  .dim { color: #a7aaad; }
  .shift { margin-left: 6px; }
  .admin-item b { width: 18px; height: 18px; border-radius: 9px; background: #d63638; font: 11px/18px "Open Sans", sans-serif; text-align: center; }
  .howdy { display: flex; align-items: center; gap: 6px; margin: 0 6px 0 auto; }
  .howdy > :global(:last-child) { margin-left: 7px; }

  main { display: flex; align-items: flex-start; gap: 24px; height: 638px; padding: 22px 0 0 143px; color: #212529; font: 16px/24px Roboto, "DejaVu Sans", sans-serif; }
  .card { border-radius: 6px; background: #f8f9fb; box-shadow: 0 8px 16px rgba(0, 0, 0, .15); }
  .account { width: 720px; height: 592px; padding: 16px; }
  .tabs { display: flex; height: 47px; padding-right: 40px; border-bottom: 1px solid #dee2e6; font-weight: 500; }
  .tab { height: 47px; padding: 10px 17px 0; border: 0 solid #dee2e6; -webkit-text-stroke: .2px; }
  .tab.active { padding: 9px 16px 0; border-width: 1px 1px 0; border-radius: 6px 6px 0 0; background: #fff; }
  .pane { padding: 32px 12px 0; }
  .alert { display: flex; align-items: center; height: 63px; padding-right: 17px; border: 1px solid #ffe69c; border-radius: 6px; background: #fff3cd; color: #664d03; }
  .form { display: grid; grid-template-columns: 320px 320px; grid-template-rows: 214px 102px; gap: 0 24px; margin-top: 18px; }
  h3 { height: 24px; margin: 0; font: 500 16px/24px "DejaVu Sans", sans-serif; -webkit-text-stroke: .3px; }
  .label { height: 24px; margin: 4px 0 11px; color: #6c757d; }
  .input { display: flex; align-items: center; height: 39px; padding: 0 13px; border: 1px solid #dee2e6; border-radius: 5px; background: #fff; color: #6c757d; }
  ul { height: 186px; margin: 26px 0 0; padding: 15px 57px 0 0; border: 1px solid #ccc; border-radius: 6px; background: #fff; font-size: 12px; line-height: 21.700px; }
  li div { height: 21.700px; }
  .repeat { padding-top: 24px; }
  .submit { display: flex; align-items: center; justify-content: center; width: 308px; height: 48px; margin: 20px auto 0; border-radius: 8px; background: #68ae8f; color: #fff; }
  .profile { width: 348px; height: 458px; padding-top: 34px; font-weight: 300; }
  .info { display: flex; align-items: flex-start; margin-bottom: 20px; }
  .info > div { display: flex; flex-direction: column; align-items: center; gap: 4px; width: 262px; margin-right: 48px; }
  .logout { display: flex; align-items: center; justify-content: center; width: 110px; height: 42px; border: 1px solid #dee2e6; border-radius: 6px; }
  .info:last-of-type { margin: 0; }
  .plans { margin: 0 4px; line-height: 29px; }
  .row { display: flex; gap: 8px; height: 74px; padding-top: 7px; border-bottom: 1px solid #dee0e3; }
  .row.head { align-items: flex-end; height: 79px; padding-bottom: 10px; color: #000; line-height: 28px; -webkit-text-stroke: .3px; }
  .num { width: 26px; color: #000; font-weight: 500; text-align: center; }
  .plan { display: flex; flex-direction: column; align-items: flex-start; width: 160px; }
  .left { display: flex; flex-direction: column; align-items: center; width: 130px; }
  .meter { width: 130px; height: 16px; border-radius: 6px; overflow: hidden; background: #e9ecef; }
  .meter div { height: 16px; background: #198754; color: #fff; font: 12px/13px Roboto, sans-serif; text-align: center; }
  .site-footer { display: flex; height: 74px; padding: 52px 0 0 834px; overflow: hidden; background: #228ed7; font: 700 14px/24px "DejaVu Sans", sans-serif; }
  .site-footer i { width: 146px; }
  .site-footer .short { width: 140px; }
  .scroll { display: flex; flex-direction: column; align-items: center; width: 15px; padding: 7px 0; }
  .scroll div { width: 9px; height: 448px; margin: 74px 0 auto; border-radius: 5px; background: #8b8b8b; }
  .b-side { display: flex; flex-direction: column; align-items: center; width: 44px; padding: 3px 0 2px; color: #ddd; }
  .b-side div { display: flex; align-items: center; height: 40.200px; }
  .b-side .side-add { margin-top: 3px; }
  .b-side hr { width: 28px; height: 1px; margin: auto 0 3px; background: #666; }
</style>
